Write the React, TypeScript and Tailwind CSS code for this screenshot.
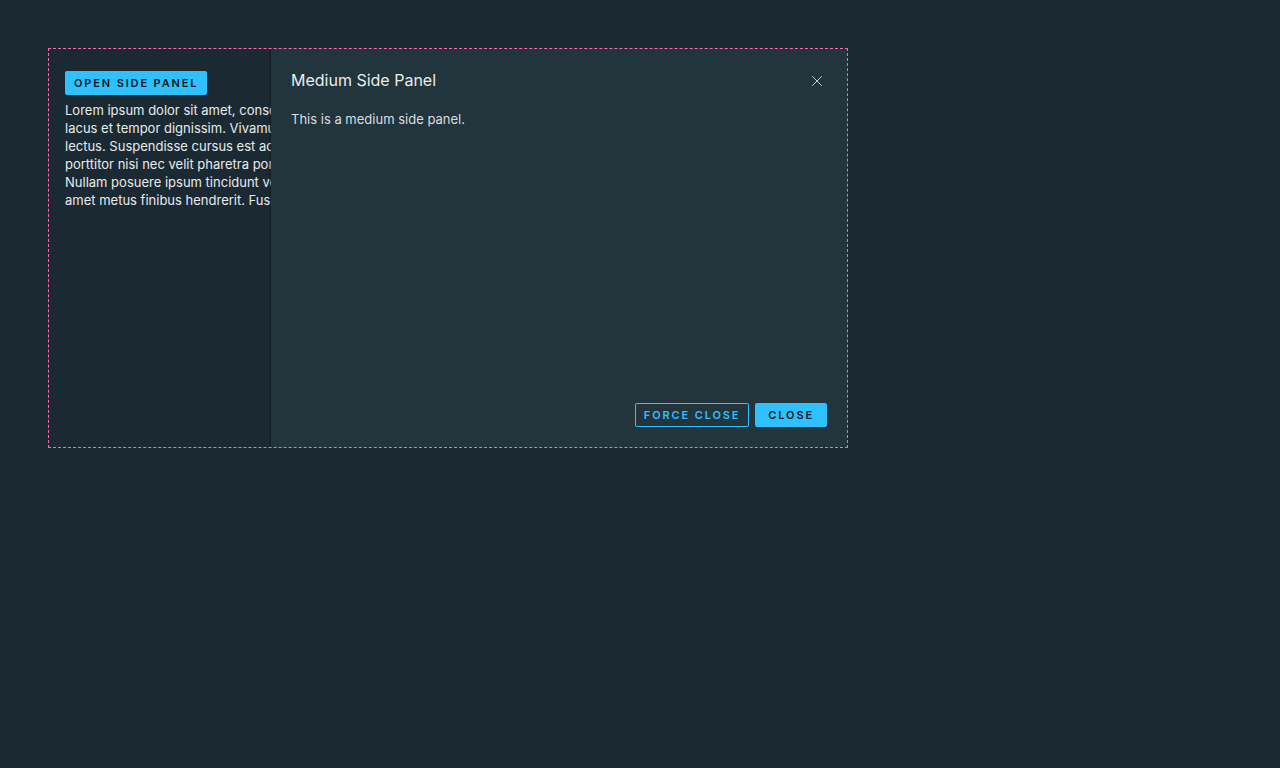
import { X } from 'lucide-react';

const LOREM = [
  'Lorem ipsum dolor sit amet, consectetur adipiscing elit. Fusce vel tortor quis nunc egestas luctus. Sed efficitur sem vel ligula',
  'lacus et tempor dignissim. Vivamus eu pharetra sapien. Donec imperdiet mi ut nibh hendrerit, at dictum tellus feugiat. Morbi at',
  'lectus. Suspendisse cursus est ac ullamcorper rhoncus. Aenean pulvinar lorem et massa vestibulum, quis facilisis nibh dapibus.',
  'porttitor nisi nec velit pharetra porta. Curabitur vehicula magna vel elit ultricies, vitae feugiat leo tincidunt. Integer non',
  'Nullam posuere ipsum tincidunt velit congue, id consequat ante pretium. Aliquam erat volutpat. Phasellus vitae purus sit',
  'amet metus finibus hendrerit. Fusce ultrices tortor a lectus tempus, nec vestibulum nisl faucibus.',
];

const FONT = "font-['Inter','Open_Sans',sans-serif]";

export default function App() {
  return (
    <div className={`min-h-screen w-full bg-[#1b2a32] pt-12 pl-12 ${FONT}`}>
      {/* demo frame */}
      <div className="relative w-[800px] h-[400px] border border-dashed border-[#ff69b4] overflow-hidden">
        <div className="w-[222px] overflow-hidden pl-4 pt-5">
          <button className="h-6 px-[9px] rounded-[2px] bg-[#2ec0ff] text-[#0b1a21] text-[11px] font-semibold tracking-[0.17em] leading-6 whitespace-nowrap">
            OPEN SIDE PANEL
          </button>
          <div className="mt-[6px] text-[13px] leading-[18px] text-[#e8ebed]">
            {LOREM.map(line => (
              <p key={line} className="whitespace-nowrap">{line}</p>
            ))}
          </div>
        </div>

        {/* side panel overlay */}
        <div className="absolute top-0 right-0 bottom-0 w-[576px] bg-[#22343c] shadow-[-1px_0_2px_rgba(0,0,0,0.35)] flex flex-col px-5 pt-5 pb-5">
          <div className="flex items-start justify-between">
            <h2 className="text-[16px] leading-[22px] text-[#e9ecee] font-normal">Medium Side Panel</h2>
            <button className="mt-[3px] mr-[1px] text-[#c8d0d4]">
              <X size={18} strokeWidth={1.3} />
            </button>
          </div>
          <p className="mt-[19px] text-[13px] leading-[18px] text-[#d9dee1]">This is a medium side panel.</p>
          <div className="mt-auto flex justify-end gap-[6px]">
            <button className="h-6 px-[8px] rounded-[2px] border border-[#2ec0ff] text-[#2ec0ff] text-[11px] font-semibold tracking-[0.17em]">
              FORCE CLOSE
            </button>
            <button className="h-6 px-[13px] rounded-[2px] bg-[#2ec0ff] text-[#0b1a21] text-[11px] font-semibold tracking-[0.17em]">
              CLOSE
            </button>
          </div>
        </div>
      </div>
    </div>
  );
}
